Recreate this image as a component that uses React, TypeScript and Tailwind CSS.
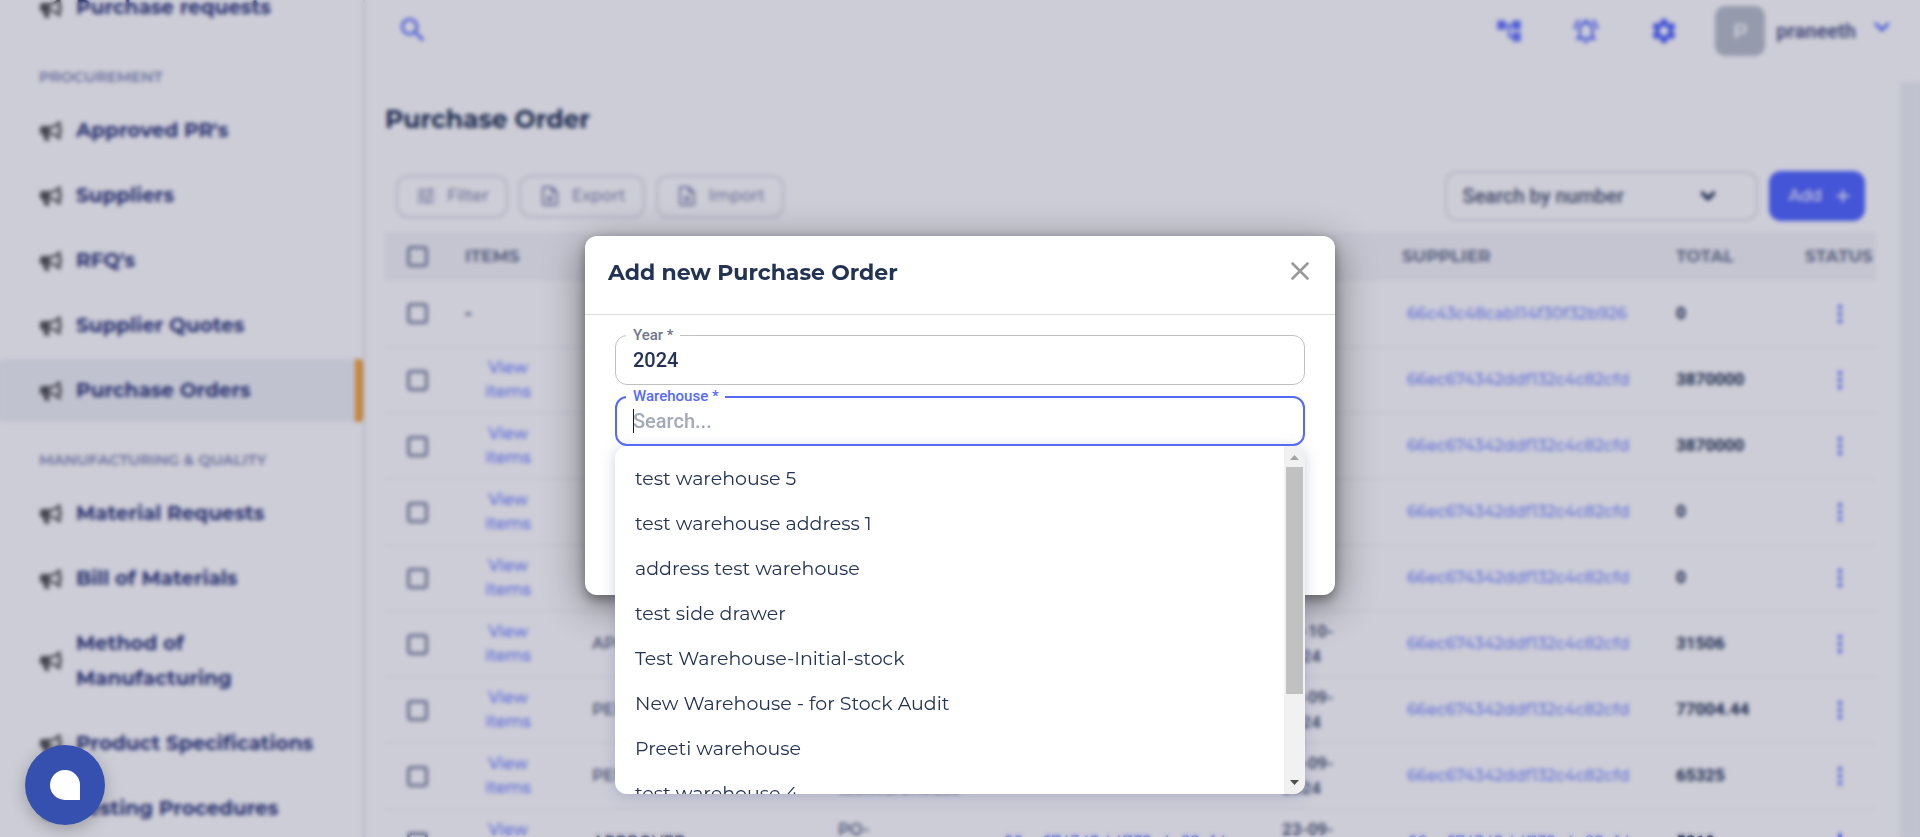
import { useState } from "react";
import { FaBullhorn } from "react-icons/fa";
import {
  MdAccountTree,
  MdAdd,
  MdMoreVert,
  MdOutlineNotificationsActive,
  MdOutlineUploadFile,
  MdSearch,
  MdSettings,
  MdTune,
} from "react-icons/md";
import { ChevronDown } from "lucide-react";

const procurement = ["Approved PR's", "Suppliers", "RFQ's", "Supplier Quotes", "Purchase Orders"];
const manufacturing = [
  "Material Requests",
  "Bill of Materials",
  "Method of Manufacturing",
  "Product Specifications",
  "Testing Procedures",
];

const warehouses = [
  "test warehouse 5",
  "test warehouse address 1",
  "address test warehouse",
  "test side drawer",
  "Test Warehouse-Initial-stock",
  "New Warehouse - for Stock Audit",
  "Preeti warehouse",
  "test warehouse 4",
];

type Order = {
  items: boolean;
  status: string;
  number: string;
  date: string;
  supplier: string;
  total: string;
};

const S = "66ec674342ddf132c4c82cfd";
const orders: Order[] = [
  { items: false, status: "", number: "", date: "", supplier: "66c43c48cab114f30f32b926", total: "0" },
  { items: true, status: "", number: "", date: "", supplier: S, total: "3870000" },
  { items: true, status: "", number: "", date: "", supplier: S, total: "3870000" },
  { items: true, status: "", number: "", date: "", supplier: S, total: "0" },
  { items: true, status: "", number: "", date: "", supplier: S, total: "0" },
  { items: true, status: "APPROVED", number: "", date: "01-10-\n2024", supplier: S, total: "31506" },
  { items: true, status: "PENDING", number: "", date: "30-09-\n2024", supplier: S, total: "77004.44" },
  { items: true, status: "PENDING", number: "PO-\ntestwarehouse", date: "23-09-\n2024", supplier: S, total: "65325" },
  { items: true, status: "APPROVED", number: "PO-\n000204", date: "23-09-\n2024", supplier: S, total: "5310" },
];

function NavItem({ label, active }: { label: string; active?: boolean }) {
  return (
    <a
      href="#"
      className={`flex items-center gap-3.5 py-3.5 pr-10 pl-10 text-xl leading-[35px] font-bold text-[#2f397c] ${
        active ? "rounded-sm border-r-8 border-[#f6a53d] bg-[#f0f2f6]" : ""
      }`}
    >
      <FaBullhorn className="size-[22px] shrink-0 text-[#555555]" />
      <span>{label}</span>
    </a>
  );
}

function NavHeading({ children }: { children: string }) {
  return <h3 className="pt-[26px] pb-3 pl-[39px] text-[15px] leading-5 font-semibold text-[#8086b5]">{children}</h3>;
}

function Sidebar() {
  return (
    <nav className="h-screen w-[365px] shrink-0 overflow-hidden border-r-2 border-[#e4e4ee]">
      <div className="-mt-6 flex flex-col gap-0.5">
        <NavItem label="Purchase requests" />
        <div>
          <NavHeading>PROCUREMENT</NavHeading>
          <div className="flex flex-col gap-0.5">
            {procurement.map((l) => (
              <NavItem key={l} label={l} active={l === "Purchase Orders"} />
            ))}
          </div>
        </div>
        <div>
          <NavHeading>{"MANUFACTURING & QUALITY"}</NavHeading>
          <div className="flex flex-col gap-0.5">
            {manufacturing.map((l) => (
              <NavItem key={l} label={l} />
            ))}
          </div>
        </div>
      </div>
    </nav>
  );
}

function TopBar() {
  return (
    <header className="flex h-[82px] shrink-0 items-start justify-between pr-[26px] pl-8">
      <button aria-label="Search" className="mt-3.5 text-[#5569ff]">
        <MdSearch className="size-8" />
      </button>
      <div className="flex items-center pt-1.5 text-[#5569ff]">
        <button aria-label="Workflow" className="mr-12 opacity-90">
          <MdAccountTree className="size-7" />
        </button>
        <button aria-label="Notifications" className="mr-12">
          <MdOutlineNotificationsActive className="size-[30px]" />
        </button>
        <button aria-label="Settings" className="mr-9">
          <MdSettings className="size-[30px]" />
        </button>
        <span className="mr-[11px] flex size-[50px] items-center justify-center rounded-[10px] bg-[#bac1ca] text-xl font-semibold text-white">
          P
        </span>
        <button className="flex items-center gap-3.5 font-[Roboto] text-xl font-bold text-[#5a6190]">
          praneeth
          <ChevronDown className="mb-2 size-6 text-[#5569ff]" strokeWidth={3} />
        </button>
      </div>
    </header>
  );
}

function OutlineButton({ icon, label }: { icon: React.ReactNode; label: string }) {
  return (
    <button className="flex h-[43px] items-center gap-2.5 rounded-xl border-2 border-[#dfdfeb] px-[17px] text-base font-medium text-[#8a8db3]">
      {icon}
      {label}
    </button>
  );
}

function Check({ label }: { label: string }) {
  return (
    <input
      type="checkbox"
      aria-label={label}
      className="block size-[21px] appearance-none rounded-[4px] border-[3px] border-[#7f88a3]"
    />
  );
}

function Orders() {
  return (
    <table className="w-full table-fixed border-collapse text-left">
      <colgroup>
        <col className="w-[65px]" />
        <col className="w-[127px]" />
        <col className="w-[246px]" />
        <col className="w-[165px]" />
        <col />
        <col className="w-[120px]" />
        <col className="w-[274px]" />
        <col className="w-[129px]" />
        <col className="w-[86px]" />
      </colgroup>
      <thead>
        <tr className="h-[49px] bg-[#f6f6f9] text-[17px] font-bold text-[#6e7892]">
          <th className="pl-[22px]">
            <Check label="Select all orders" />
          </th>
          <th className="pl-[15px]">ITEMS</th>
          <td />
          <td />
          <td />
          <td />
          <th className="pl-[15px]">SUPPLIER</th>
          <th className="pl-[15px]">TOTAL</th>
          <th className="pl-[15px]">STATUS</th>
        </tr>
      </thead>
      <tbody>
        {orders.map((o, i) => (
          <tr key={i} className="h-[66px] border-b-2 border-[#f7f7fa] text-[17px] text-[#223354]">
            <td className="pl-[22px]">
              <Check label={`Select order ${i + 1}`} />
            </td>
            <td className={o.items ? "pr-[11px]" : "pl-[15px] font-bold"}>
              {o.items ? (
                <a href="#" className="mx-auto block w-[60px] text-center text-base leading-6 font-medium text-[#7283ff]">
                  View items
                </a>
              ) : (
                "-"
              )}
            </td>
            <td className="pl-[15px] text-base font-semibold text-[#5f6b88]">{o.status}</td>
            <td className="pl-[15px] text-base leading-[25px] font-semibold whitespace-pre-line text-[#5f6b88]">
              {o.number}
            </td>
            <td className="pl-[15px]">
              {o.number && (
                <a href="#" className="text-base font-medium text-[#7283ff]">
                  {S}
                </a>
              )}
            </td>
            <td className="pl-[15px] font-[Roboto] leading-[25px] font-semibold whitespace-pre-line text-[#4c5874]">
              {o.date}
            </td>
            <td className="pl-5">
              <a href="#" className="text-base font-medium text-[#8090ff]">
                {o.supplier}
              </a>
            </td>
            <td className="pl-[15px] font-[Roboto] font-bold">{o.total}</td>
            <td className="pl-9">
              <button aria-label="Order actions" className="block text-[#6577ff]">
                <MdMoreVert className="size-7" />
              </button>
            </td>
          </tr>
        ))}
      </tbody>
    </table>
  );
}

function Page() {
  return (
    <div className="flex h-screen overflow-hidden bg-white">
      <Sidebar />
      <div className="flex min-w-0 grow flex-col">
        <TopBar />
        <div className="flex min-h-0 grow bg-[#f0f2f6] pr-5">
          <main className="min-w-0 grow bg-white pr-6 pl-5">
            <h1 className="pt-5 text-[25px] leading-[34px] font-bold text-[#223354]">Purchase Order</h1>
            <div className="flex items-center justify-between pt-[35px] pr-[11px] pb-[11px] pl-[11px]">
              <div className="flex gap-[11px]">
                <OutlineButton icon={<MdTune className="size-[22px]" />} label="Filter" />
                <OutlineButton icon={<MdOutlineUploadFile className="size-6" />} label="Export" />
                <OutlineButton icon={<MdOutlineUploadFile className="size-6" />} label="Import" />
              </div>
              <div className="flex gap-[11px]">
                <div className="relative">
                  <select
                    aria-label="Search by"
                    className="h-[50px] w-[313px] appearance-none rounded-xl border-2 border-[#e4e4ea] px-4 font-[Roboto] text-xl font-medium text-[#4c5874]"
                  >
                    <option>Search by number</option>
                  </select>
                  <ChevronDown
                    className="pointer-events-none absolute top-[14px] right-[39px] size-[22px] text-[#223354]"
                    strokeWidth={4}
                  />
                </div>
                <button className="flex h-[50px] items-center gap-2.5 rounded-xl bg-[#5569ff] pr-[11px] pl-5 text-base font-medium text-white">
                  Add
                  <MdAdd className="size-[22px]" />
                </button>
              </div>
            </div>
            <Orders />
          </main>
        </div>
      </div>
    </div>
  );
}

function WarehouseList() {
  return (
    <div className="absolute top-full left-0 flex h-[348px] w-full overflow-hidden rounded-xl bg-white shadow-[0_2px_14px_rgba(110,120,170,0.35)]">
      <ul role="listbox" aria-label="Warehouses" className="grow overflow-hidden py-2.5">
        {warehouses.map((w) => (
          <li key={w} role="option" aria-selected={false} className="px-5 text-[19px] leading-[45px] text-[#223354]">
            {w}
          </li>
        ))}
      </ul>
      <div className="flex w-[21px] shrink-0 flex-col items-center bg-[#f1f1f1]">
        <svg viewBox="0 0 21 21" className="size-[21px]" aria-hidden="true">
          <path d="M6 14h9l-4.500-5z" fill="#a3a3a3" />
        </svg>
        <div className="h-[227px] w-[17px] bg-[#c1c1c1]" />
        <svg viewBox="0 0 21 21" className="mt-auto size-[21px]" aria-hidden="true">
          <path d="M6 7h9l-4.500 5z" fill="#505050" />
        </svg>
      </div>
    </div>
  );
}

function OrderDialog() {
  const [year, setYear] = useState("2024");
  const [query, setQuery] = useState("");
  return (
    <section
      role="dialog"
      aria-labelledby="dialog-title"
      className="h-[359px] w-[750px] rounded-xl bg-white shadow-[0_5px_12px_rgba(0,0,0,0.35),0_10px_40px_rgba(0,0,0,0.45)]"
    >
      <div className="flex h-[79px] items-center justify-between border-b border-[#dcdcdc] pr-[23px] pb-1.5 pl-[23px]">
        <h2 id="dialog-title" className="text-[22px] font-bold text-[#223354]">
          Add new Purchase Order
        </h2>
        <button aria-label="Close" className="mb-0.5 text-[#999999]">
          <svg viewBox="0 0 24 24" className="size-6" aria-hidden="true">
            <path d="M4.500 4.500l15 15m0-15l-15 15" fill="none" stroke="currentColor" strokeWidth="2.600" strokeLinecap="round" />
          </svg>
        </button>
      </div>
      <div className="flex flex-col gap-[11px] px-[30px] pt-5 font-[Roboto] font-medium">
        <div className="relative">
          <label htmlFor="year" className="absolute -top-2.5 left-[11px] bg-white pr-1.5 pl-[7px] text-[15px] leading-5 text-[#6e7891]">
            Year *
          </label>
          <input
            id="year"
            value={year}
            onChange={(e) => setYear(e.target.value)}
            className="block h-[50px] w-full rounded-xl border border-[#c0c0c0] px-[17px] text-xl text-[#223354] outline-none"
          />
        </div>
        <div className="relative">
          <label htmlFor="warehouse" className="absolute -top-2.5 left-[11px] bg-white pr-1.5 pl-[7px] text-[15px] leading-5 text-[#5569ff]">
            Warehouse *
          </label>
          <input
            id="warehouse"
            value={query}
            placeholder="Search..."
            onChange={(e) => setQuery(e.target.value)}
            className="block h-[50px] w-full rounded-xl border-2 border-[#5569ff] px-4 text-xl text-[#223354] outline-none placeholder:text-[#a2a9b8]"
          />
          <span className="absolute top-[13px] left-[18px] h-6 w-px bg-[#111a2c]" />
          <div className="font-[Montserrat,Inter,sans-serif] font-normal">
            <WarehouseList />
          </div>
        </div>
      </div>
    </section>
  );
}

export default function App() {
  return (
    <div className="font-[Montserrat,Inter,sans-serif]">
      <Page />
      <div className="fixed inset-0 flex items-center justify-center bg-[#030335]/20 pb-1.5 backdrop-blur-[2px]">
        <OrderDialog />
      </div>
      <button
        aria-label="Open chat"
        className="fixed bottom-3 left-[25px] flex size-20 items-center justify-center rounded-full bg-[#3650af] shadow-[0_4px_16px_rgba(0,0,0,0.25)]"
      >
        <span className="size-[30px] rounded-full rounded-br-none bg-white" />
      </button>
    </div>
  );
}
